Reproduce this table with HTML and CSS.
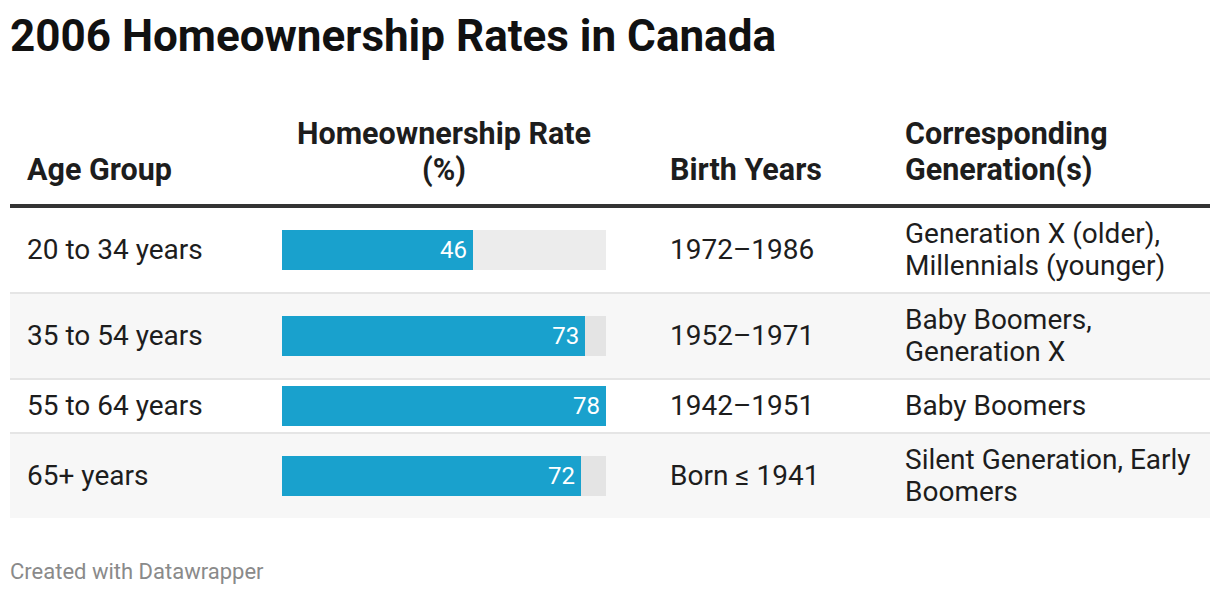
FILE: index.html
```html
<!DOCTYPE html>
<html lang="en">
<head>
<meta charset="utf-8">
<title>2006 Homeownership Rates in Canada</title>
<link rel="stylesheet" href="styles.css">
</head>
<body>
<div class="chart">
  <h1 class="title">2006 Homeownership Rates in Canada</h1>
  <table class="data">
    <colgroup>
      <col class="c-age">
      <col class="c-rate">
      <col class="c-birth">
      <col class="c-gen">
    </colgroup>
    <thead>
      <tr>
        <th class="col-age">Age Group</th>
        <th class="col-rate">Homeownership Rate<br>(%)</th>
        <th class="col-birth">Birth Years</th>
        <th class="col-gen">Corresponding<br>Generation(s)</th>
      </tr>
    </thead>
    <tbody>
      <tr>
        <td class="col-age">20 to 34 years</td>
        <td class="col-rate"><div class="bar"><div class="fill" style="width:58.97%"><span class="val">46</span></div></div></td>
        <td class="col-birth">1972–1986</td>
        <td class="col-gen">Generation X (older),<br>Millennials (younger)</td>
      </tr>
      <tr>
        <td class="col-age">35 to 54 years</td>
        <td class="col-rate"><div class="bar"><div class="fill" style="width:93.59%"><span class="val">73</span></div></div></td>
        <td class="col-birth">1952–1971</td>
        <td class="col-gen">Baby Boomers,<br>Generation X</td>
      </tr>
      <tr>
        <td class="col-age">55 to 64 years</td>
        <td class="col-rate"><div class="bar"><div class="fill" style="width:100%"><span class="val">78</span></div></div></td>
        <td class="col-birth">1942–1951</td>
        <td class="col-gen">Baby Boomers</td>
      </tr>
      <tr>
        <td class="col-age">65+ years</td>
        <td class="col-rate"><div class="bar"><div class="fill" style="width:92.31%"><span class="val">72</span></div></div></td>
        <td class="col-birth">Born ≤ 1941</td>
        <td class="col-gen">Silent Generation, Early Boomers</td>
      </tr>
    </tbody>
  </table>
  <p class="footer">Created with Datawrapper</p>
</div>
</body>
</html>
```

FILE: styles.css
```css
html, body {
  margin: 0;
  padding: 0;
  background: #ffffff;
}
body {
  font-family: Roboto, "Liberation Sans", sans-serif;
  color: #1d1d1d;
}
.chart {
  padding: 0 10px;
}
.title {
  margin: 0;
  padding-top: 10px;
  font-size: 44px;
  line-height: 52px;
  font-weight: 700;
  color: #111;
}
.data {
  margin-top: 54px;
  width: 1200px;
  border-collapse: collapse;
  table-layout: fixed;
}
.c-age { width: 255px; }
.c-rate { width: 388px; }
.c-birth { width: 235px; }
.c-gen { width: 322px; }
.data th {
  font-size: 30.5px;
  line-height: 36px;
  font-weight: 700;
  text-align: left;
  vertical-align: bottom;
  padding: 0 17px 16px 17px;
  border-bottom: 4px solid #333;
  color: #1d1d1d;
}
.data th.col-rate {
  text-align: center;
  padding-right: 47px;
}
.data th.col-gen {
  padding-right: 8px;
}
.data td {
  font-size: 28px;
  line-height: 32px;
  padding: 10px 17px;
  vertical-align: middle;
  border-bottom: 2px solid #e5e5e5;
}
.data td.col-gen {
  padding-right: 8px;
}
.data tbody tr:last-child td {
  border-bottom: none;
}
.data tbody tr:nth-child(even) td {
  background: #f7f7f7;
}
.data td.col-rate {
  padding-right: 47px;
}
.bar {
  height: 40px;
  margin: -4px 0;
  background: rgba(0, 0, 0, 0.075);
}
.fill {
  height: 100%;
  background: #19a1cd;
  display: flex;
  align-items: center;
  justify-content: flex-end;
  box-sizing: border-box;
  padding-right: 6px;
}
.val {
  color: #fff;
  font-size: 24px;
  line-height: 26px;
}
.footer {
  margin: 42px 0 0;
  font-size: 22px;
  line-height: 24px;
  color: #8a8a8a;
}
```
